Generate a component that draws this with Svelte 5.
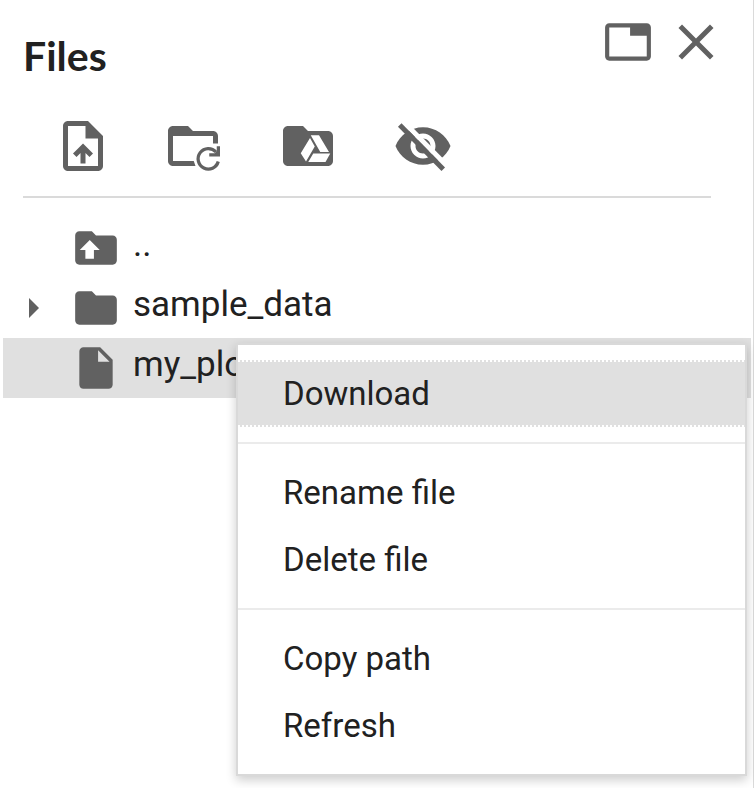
<script>
  const folder = 'M10 4H4c-1.1 0-2 .9-2 2v12c0 1.1.9 2 2 2h16c1.1 0 2-.9 2-2V8c0-1.1-.9-2-2-2h-8l-2-2z';
  const file =
    'M6 2c-1.1 0-1.99.9-1.99 2L4 20c0 1.1.89 2 1.99 2H18c1.1 0 2-.9 2-2V8l-6-6H6zm7 7V3.5L18.5 9H13z';

  const menuGroups = [['Download'], ['Rename file', 'Delete file'], ['Copy path', 'Refresh']];
  let active = $state('Download');
</script>

<main class="panel">
  <div class="top">
    <header>
      <h1>Files</h1>
      <div class="window-actions">
        <button type="button" aria-label="Open in tab">
          <svg class="medium" viewBox="0 0 24 24">
            <path d="M21 3H3c-1.1 0-2 .9-2 2v14c0 1.1.9 2 2 2h18c1.1 0 2-.9 2-2V5c0-1.1-.9-2-2-2zm0 16H3V5h10v4h8v10z" />
          </svg>
        </button>
        <button type="button" aria-label="Close">
          <svg class="large" viewBox="0 0 24 24">
            <path d="M19 6.41L17.59 5 12 10.59 6.41 5 5 6.41 10.59 12 5 17.59 6.41 19 12 13.41 17.59 19 19 17.59 13.41 12z" />
          </svg>
        </button>
      </div>
    </header>

    <div class="toolbar" role="toolbar" aria-label="File actions">
      <button type="button" aria-label="Upload">
        <svg class="large" viewBox="-2 0 24 24">
          <path d="M14 2H6c-1.1 0-1.99.9-1.99 2L4 20c0 1.1.89 2 1.99 2H18c1.1 0 2-.9 2-2V8l-6-6zm4 18H6V4h7v5h5v11zM8 15.01l1.41 1.41L11 14.84V19h2v-4.16l1.59 1.59L16 15.01 12.01 11z" />
        </svg>
      </button>
      <button type="button" aria-label="Refresh files">
        <svg class="large" viewBox="0 0 24 24">
          <path d="M10 4H4c-1.1 0-2 .9-2 2v12c0 1.1.9 2 2 2h9l-.7-2H4V8h16v3h2V8c0-1.1-.9-2-2-2h-8l-2-2z" />
          <path class="line" d="M22.1 18.2A4.1 4.1 0 1 1 21.2 14.4" />
          <path d="M22.8 12.1v4.1h-4.3v-1.3h2.2l.8-.9v-1.9z" />
        </svg>
      </button>
      <button type="button" aria-label="Mount Drive">
        <svg class="large" viewBox="0 0 24 24">
          <path d={folder} />
          <path class="cut" d="M12.8 8.8l1.9 3.4-3.5 6-2.1-3.3zM13.1 7.7h3.3l4 6.7h-3.5zM14.1 15h6.8L19 18.4h-6.9z" />
        </svg>
      </button>
      <button type="button" aria-label="Toggle hidden files">
        <svg class="large" viewBox="0 0 24 24">
          <path d="M12 4.5C7 4.5 2.73 7.61 1 12c1.73 4.39 6 7.5 11 7.5s9.27-3.11 11-7.5c-1.73-4.39-6-7.5-11-7.5zM12 17c-2.76 0-5-2.24-5-5s2.24-5 5-5 5 2.24 5 5-2.24 5-5 5zm0-8c-1.66 0-3 1.34-3 3s1.34 3 3 3 3-1.34 3-3-1.34-3-3-3z" />
          <path class="gap" d="M4.1 2.2L21.5 19.9" />
          <path class="slash" d="M2.7 3.6L20.1 21.3" />
        </svg>
      </button>
    </div>
  </div>

  <ul class="tree">
    <li>
      <span class="caret"></span>
      <svg class="medium" viewBox="0 0 24 24">
        <path d={folder} />
        <path class="cut" d="M9 8.2L13.8 13H11v4.1H6.9V13H4.2z" />
      </svg>
      <span class="name">..</span>
    </li>
    <li>
      <button class="caret" type="button" aria-label="Expand sample_data">
        <svg class="arrow" viewBox="0 0 10 20"><path d="M0 0l10 10L0 20z" /></svg>
      </button>
      <svg class="medium" viewBox="0 0 24 24"><path d={folder} /></svg>
      <span class="name">sample_data</span>
    </li>
    <li class="selected">
      <span class="caret"></span>
      <svg class="medium" viewBox="0 0 24 24"><path d={file} /></svg>
      <span class="name">my_plo</span>

      <div class="menu" role="menu">
        {#each menuGroups as group}
          <div class="group" role="group">
            {#each group as label}
              <button
                type="button"
                role="menuitem"
                class:active={active === label}
                onmouseenter={() => (active = label)}>{label}</button
              >
            {/each}
          </div>
        {/each}
      </div>
    </li>
  </ul>
</main>

<style>
  :global(body) {
    margin: 0;
    background: #fff;
  }

  .panel {
    box-sizing: border-box;
    min-height: 100vh;
    padding: 0 2px 0 3px;
    border-right: 1px solid #dadada;
    color: #212121;
    font-family: Roboto, 'Liberation Sans', sans-serif;
  }

  button {
    display: block;
    margin: 0;
    padding: 0;
    border: 0;
    background: none;
    color: inherit;
    font: inherit;
    cursor: pointer;
  }

  svg {
    display: block;
    flex: none;
    fill: #616161;
  }

  .medium {
    width: 50px;
    height: 50px;
  }

  .large {
    width: 60px;
    height: 60px;
  }

  .cut {
    fill: #fff;
  }

  .line {
    fill: none;
    stroke: #616161;
    stroke-width: 1.3;
  }

  .gap,
  .slash {
    fill: none;
    stroke: #fff;
    stroke-width: 2;
  }

  .slash {
    stroke: #616161;
  }

  .top {
    margin: 0 40px 0 20px;
    border-bottom: 2px solid #dadada;
  }

  header {
    display: flex;
    justify-content: space-between;
    align-items: flex-start;
    padding-top: 12px;
  }

  h1 {
    margin: 0;
    font-family: Lato, sans-serif;
    font-size: 41px;
    font-weight: 700;
    line-height: 88px;
  }

  .window-actions {
    display: flex;
    align-items: center;
    gap: 13px;
    margin-right: -15px;
  }

  .toolbar {
    display: flex;
    gap: 55px;
    padding: 16px 0 20px 25px;
  }

  .tree {
    margin: 20px 0 0;
    padding: 0;
    list-style: none;
    font-size: 35px;
  }

  li {
    position: relative;
    display: flex;
    align-items: center;
    height: 60px;
  }

  .selected {
    background: #e0e0e0;
  }

  .caret {
    box-sizing: border-box;
    flex: none;
    width: 68px;
    padding-left: 26px;
  }

  .arrow {
    width: 10px;
    height: 20px;
  }

  .name {
    align-self: flex-start;
    padding-left: 12px;
    line-height: 54px;
  }

  .menu {
    position: absolute;
    top: 5px;
    right: 4px;
    left: 233px;
    z-index: 1;
    border: 2px solid #d9d9d9;
    background: #fff;
    box-shadow: 0 4px 10px rgba(0, 0, 0, 0.2);
    font-size: 33px;
  }

  .group {
    padding: 15px 0;
  }

  .group + .group {
    border-top: 2px solid #ebebeb;
  }

  .menu button {
    width: 100%;
    padding-left: 45px;
    line-height: 67px;
    text-align: left;
  }

  .menu .active {
    background:
      repeating-linear-gradient(90deg, #fff 0 2px, #e0e0e0 2px 4px) top / 100% 2px no-repeat,
      repeating-linear-gradient(90deg, #fff 0 2px, #e0e0e0 2px 4px) bottom / 100% 2px no-repeat,
      #e0e0e0;
  }
</style>
